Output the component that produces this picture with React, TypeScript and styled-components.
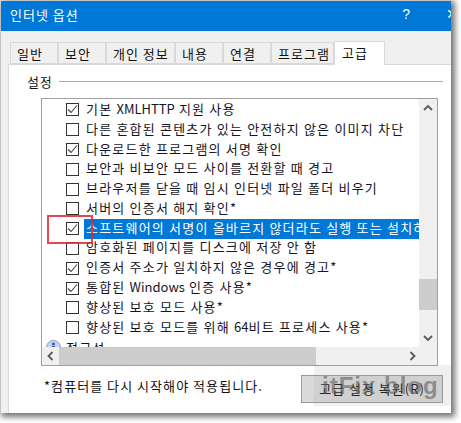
import * as React from 'react'
import styled, { createGlobalStyle } from 'styled-components'

const Global = createGlobalStyle`
  html, body {
    margin: 0;
    padding: 0;
    background: #fff;
    width: 461px;
    height: 423px;
    overflow: hidden;
  }
  * { box-sizing: border-box; }
`

const Page = styled.div`
  position: relative;
  width: 461px;
  height: 423px;
  padding: 1px 10px 10px 1px;
  overflow: hidden;
  font-family: 'Noto Sans CJK KR', 'Noto Sans', sans-serif;
  font-size: 13px;
  color: #111;
`

const Window = styled.div`
  width: 450px;
  height: 412px;
  display: flex;
  flex-direction: column;
  background: #f0f0f0;
  box-shadow: 2px 2px 6px 2px rgba(0, 0, 0, 0.55);
  overflow: hidden;
`

const TitleBar = styled.div`
  flex: none;
  height: 30px;
  background: #0078d7;
  color: #fff;
  display: flex;
  align-items: center;
  justify-content: space-between;
  padding: 0 0 4px 9px;
  font-size: 13px;
  letter-spacing: 1px;
`

const TitleButtons = styled.div`
  display: flex;
  align-items: center;
  gap: 35px;
  margin-right: -8px;
  font-family: 'Liberation Sans', sans-serif;
  font-size: 14px;
`

const TabStrip = styled.div`
  flex: none;
  display: flex;
  align-items: flex-end;
  height: 33px;
  padding-left: 9px;
`

const Tab = styled.div<{ $w: number; $active?: boolean }>`
  width: ${p => p.$w}px;
  height: ${p => (p.$active ? 24 : 22)}px;
  margin-bottom: ${p => (p.$active ? -1 : 0)}px;
  position: relative;
  z-index: ${p => (p.$active ? 1 : 0)};
  display: flex;
  align-items: center;
  padding-left: ${p => (p.$active ? 7 : 6)}px;
  padding-bottom: ${p => (p.$active ? 3 : 0)}px;
  background: ${p => (p.$active ? '#fff' : '#f0f0f0')};
  border: 1px solid #d9d9d9;
  border-bottom: ${p => (p.$active ? 'none' : '1px solid #d9d9d9')};
  letter-spacing: 1px;
  white-space: nowrap;
`

const Panel = styled.div`
  flex: 1;
  margin-left: 7px;
  background: #fff;
  border-left: 1px solid #d9d9d9;
  border-top: 1px solid #d9d9d9;
  padding: 7px 8px 0 18px;
  display: flex;
  flex-direction: column;
`

const GroupLabel = styled.div`
  display: flex;
  align-items: center;
  gap: 6px;
  height: 18px;
  letter-spacing: 0.8px;
  &::after {
    content: '';
    flex: 1;
    height: 1px;
    background: #a8a8a8;
  }
`

const ListBox = styled.div`
  width: 397px;
  height: 268px;
  margin: 8px 0 0 14px;
  border: 1px solid #a0a0a0;
  display: grid;
  grid-template-columns: 1fr 18px;
  grid-template-rows: 1fr 18px;
`

const Rows = styled.div`
  overflow: hidden;
  padding: 1px 0 0 24px;
`

const Row = styled.div`
  height: 19.8px;
  display: flex;
  align-items: center;
  white-space: nowrap;
  letter-spacing: 1.2px;
  color: #151525;
`

const CheckBox = styled.span`
  flex: none;
  width: 13px;
  height: 13px;
  border: 1px solid #333;
  background: #fff;
  margin-right: 5px;
  display: flex;
  align-items: center;
  justify-content: center;
`

const RowText = styled.span<{ $selected?: boolean }>`
  flex: 1;
  min-width: 0;
  height: 20px;
  line-height: 18px;
  padding-left: 2px;
  overflow: hidden;
  background: ${p => (p.$selected ? '#0078d7' : 'transparent')};
  color: ${p => (p.$selected ? '#fff' : 'inherit')};
`

const Latin = styled.span`
  letter-spacing: 0;
`

const GroupRow = styled.div`
  height: 20px;
  margin-left: -20px;
  display: flex;
  align-items: center;
  gap: 5px;
  letter-spacing: 1.2px;
`

const VScroll = styled.div`
  background: #f0f0f0;
  display: flex;
  flex-direction: column;
  align-items: center;
`

const ScrollArrow = styled.div`
  flex: none;
  width: 17px;
  height: 19px;
  display: flex;
  align-items: center;
  justify-content: center;
`

const VTrack = styled.div`
  flex: 1;
  width: 100%;
  padding-top: 161px;
`

const VThumb = styled.div`
  height: 31px;
  background: #cdcdcd;
`

const HScroll = styled.div`
  background: #f0f0f0;
  grid-column: 1 / 3;
  display: flex;
  align-items: center;
`

const HThumb = styled.div`
  width: 257px;
  height: 100%;
  background: #cdcdcd;
`

const HSpace = styled.div`
  flex: 1;
`

const Footer = styled.div`
  display: flex;
  justify-content: space-between;
  margin: 9px 0 0 17px;
`

const Note = styled.div`
  padding-top: 1px;
  letter-spacing: 1.05px;
`

const Button = styled.div`
  width: 142px;
  height: 28px;
  border: 1px solid #9a9a9a;
  background: #dadada;
  display: flex;
  align-items: center;
  justify-content: center;
  letter-spacing: 1px;
  padding-bottom: 2px;
`

const Highlight = styled.div`
  position: absolute;
  left: 47px;
  top: 215px;
  width: 46px;
  height: 29px;
  border: 2px solid rgba(226, 40, 50, 0.85);
`

const Watermark = styled.div`
  position: absolute;
  left: 314px;
  top: 365px;
  width: 137px;
  height: 41px;
  padding: 0 0 0 8px;
  background: rgba(150, 150, 150, 0.14);
  display: flex;
  align-items: center;
  font-family: 'Liberation Sans', sans-serif;
  font-weight: 700;
  font-size: 24px;
  letter-spacing: 1px;
  color: rgba(80, 80, 80, 0.55);
  white-space: nowrap;
`

const Check = () => (
  <svg width="11" height="11" viewBox="0 0 11 11" fill="none">
    <path d="M1 5.5 L4 8.5 L10 1.5" stroke="#444" strokeWidth="1.1" />
  </svg>
)

const Chevron = ({ dir }: { dir: 'up' | 'down' | 'left' | 'right' }) => {
  const points = {
    up: 'M1 6 L5 2 L9 6',
    down: 'M1 3 L5 7 L9 3',
    left: 'M6.5 1 L2.5 5 L6.5 9',
    right: 'M3.5 1 L7.5 5 L3.5 9'
  }[dir]
  return (
    <svg width="10" height="10" viewBox="0 0 10 10" fill="none">
      <path d={points} stroke="#5a5a5a" strokeWidth="1.8" />
    </svg>
  )
}

const GroupIcon = () => (
  <svg width="15" height="15" viewBox="0 0 15 15">
    <circle cx="7.5" cy="7.5" r="7" fill="#c5d3ec" stroke="#8a9cc0" />
    <circle cx="7.5" cy="4" r="1.6" fill="#3a5fb0" />
    <rect x="6" y="6" width="3" height="6" fill="#3a5fb0" />
  </svg>
)

const tabs = [
  { label: '일반', w: 48 },
  { label: '보안', w: 48 },
  { label: '개인 정보', w: 69 },
  { label: '내용', w: 48 },
  { label: '연결', w: 48 },
  { label: '프로그램', w: 63 },
  { label: '고급', w: 51, active: true }
]

const options: { key: string; text: React.ReactNode; checked: boolean; selected?: boolean }[] = [
  { key: 'xhr', text: <>기본 <Latin>XMLHTTP</Latin> 지원 사용</>, checked: true },
  { key: 'mixed', text: '다른 혼합된 콘텐츠가 있는 안전하지 않은 이미지 차단', checked: false },
  { key: 'sign', text: '다운로드한 프로그램의 서명 확인', checked: true },
  { key: 'zone', text: '보안과 비보안 모드 사이를 전환할 때 경고', checked: false },
  { key: 'temp', text: '브라우저를 닫을 때 임시 인터넷 파일 폴더 비우기', checked: false },
  { key: 'revoke', text: '서버의 인증서 해지 확인*', checked: false },
  { key: 'invalid', text: '소프트웨어의 서명이 올바르지 않더라도 실행 또는 설치하도록 허용', checked: true, selected: true },
  { key: 'cache', text: '암호화된 페이지를 디스크에 저장 안 함', checked: false },
  { key: 'mismatch', text: '인증서 주소가 일치하지 않은 경우에 경고*', checked: true },
  { key: 'auth', text: <>통합된 <Latin>Windows</Latin> 인증 사용*</>, checked: true },
  { key: 'epm', text: '향상된 보호 모드 사용*', checked: false },
  { key: 'epm64', text: <>향상된 보호 모드를 위해 <Latin>64</Latin>비트 프로세스 사용*</>, checked: false }
]

export default function App() {
  return (
    <Page>
      <Global />
      <Window>
        <TitleBar>
          <span>인터넷 옵션</span>
          <TitleButtons>
            <span>?</span>
            <span>✕</span>
          </TitleButtons>
        </TitleBar>
        <TabStrip>
          {tabs.map(tab => (
            <Tab key={tab.label} $w={tab.w} $active={tab.active}>
              {tab.label}
            </Tab>
          ))}
        </TabStrip>
        <Panel>
          <GroupLabel>설정</GroupLabel>
          <ListBox>
            <Rows>
              {options.map(option => (
                <Row key={option.key}>
                  <CheckBox>{option.checked ? <Check /> : null}</CheckBox>
                  <RowText $selected={option.selected}>{option.text}</RowText>
                </Row>
              ))}
              <GroupRow>
                <GroupIcon />
                접근성
              </GroupRow>
            </Rows>
            <VScroll>
              <ScrollArrow>
                <Chevron dir="up" />
              </ScrollArrow>
              <VTrack>
                <VThumb />
              </VTrack>
              <ScrollArrow>
                <Chevron dir="down" />
              </ScrollArrow>
            </VScroll>
            <HScroll>
              <ScrollArrow>
                <Chevron dir="left" />
              </ScrollArrow>
              <HThumb />
              <HSpace />
              <ScrollArrow>
                <Chevron dir="right" />
              </ScrollArrow>
              <ScrollArrow />
            </HScroll>
          </ListBox>
          <Footer>
            <Note>*컴퓨터를 다시 시작해야 적용됩니다.</Note>
            <Button>고급 설정 복원(R)</Button>
          </Footer>
        </Panel>
      </Window>
      <Highlight />
      <Watermark>itFix blog</Watermark>
    </Page>
  )
}
